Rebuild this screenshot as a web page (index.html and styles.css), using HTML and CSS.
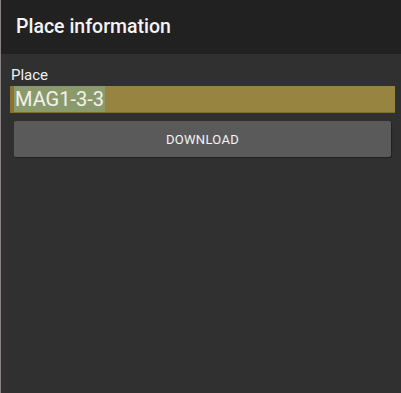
FILE: index.html
```html
<!DOCTYPE html>
<html lang="en">
<head>
    <meta charset="UTF-8">
    <meta name="viewport" content="width=device-width, initial-scale=1.0">
    <title>Place information</title>
    <link rel="stylesheet" href="styles.css">
</head>
<body>
    <div class="screen">
        <div class="toolbar">
            <h1>Place information</h1>
        </div>
        <div class="content">
            <label class="label">Place</label>
            <div class="field">
                <span class="selected">MAG1-3-3</span>
            </div>
            <button class="btn">DOWNLOAD</button>
        </div>
    </div>
</body>
</html>
```

FILE: styles.css
```css
html, body { margin: 0; padding: 0; height: 100%; }
body { font-family: Roboto, "Noto Sans", sans-serif; background: #303030; color: #fff; }
.screen { height: 393px; border-left: 1px solid #8a8282; box-sizing: border-box; display: flex; flex-direction: column; }
.toolbar { height: 54px; background: #212121; display: flex; align-items: center; padding-left: 15px; }
.toolbar h1 { margin: 0; font-size: 19.5px; font-weight: 500; color: #f4f4f4; padding-bottom: 1px; }
.content { flex: 1; padding: 12px 6px 0 9px; display: flex; flex-direction: column; }
.label { font-size: 15px; line-height: 18px; color: #f0f0f0; margin-left: 1px; }
.field {
    height: 26px;
    margin-top: 2px;
    background: #978440;
    border-left: 4px solid #8a7430;
    border-bottom: 1px solid #7e6c34;
    display: flex;
    align-items: stretch;
}
.selected {
    background: #8b9a6b;
    color: #f2f2ee;
    font-size: 20px;
    line-height: 27px;
    padding: 0 1px 0 1px;
}
.btn {
    margin: 8px 4px 0 4px;
    height: 36px;
    background: #5a5a5a;
    border: none;
    border-radius: 2px;
    box-shadow: 1px 1px 1px rgba(0,0,0,0.35);
    color: #f4f4f4;
    font-family: Roboto, sans-serif;
    font-size: 13px;
    font-weight: 400;
    letter-spacing: 0.3px;
}
```
